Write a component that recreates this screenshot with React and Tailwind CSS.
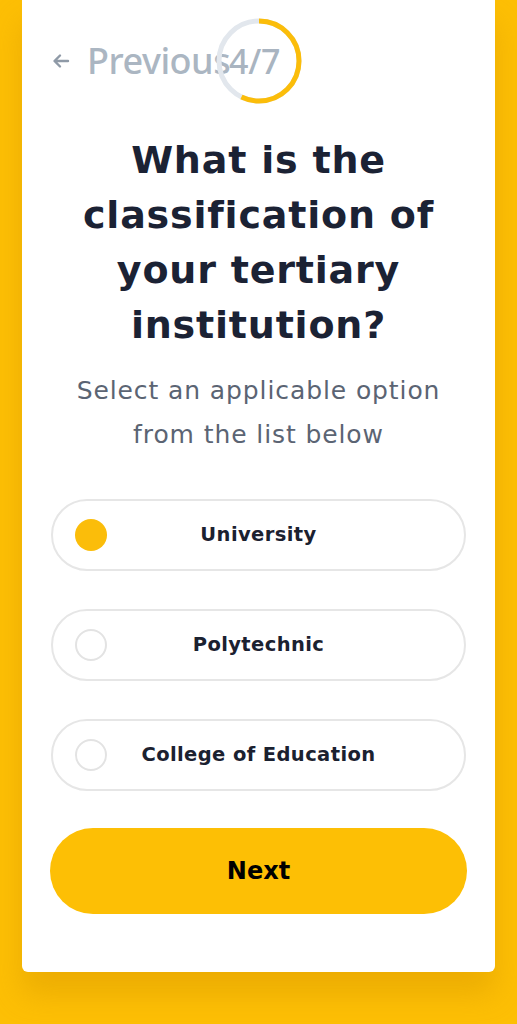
import React from "react";

const options = ["University", "Polytechnic", "College of Education"];

function Ring() {
  const r = 40;
  const c = 2 * Math.PI * r;
  const frac = 4 / 7;
  return (
    <svg width="88" height="88" viewBox="0 0 88 88" className="absolute left-1/2 top-0 -translate-x-1/2">
      <circle cx="44" cy="44" r={r} fill="none" stroke="#e2e7ed" strokeWidth="5" />
      <circle
        cx="44"
        cy="44"
        r={r}
        fill="none"
        stroke="#fbbd0a"
        strokeWidth="5"
        strokeDasharray={`${c * frac} ${c}`}
        transform="rotate(-90 44 44)"
      />
    </svg>
  );
}

export default function App() {
  return (
    <div className="h-[1024px] overflow-hidden bg-[#fdbf05] px-[22px] font-['DejaVu_Sans','Noto_Sans',sans-serif]">
      <div className="h-[972px] rounded-b-[6px] bg-white shadow-[0_22px_30px_rgba(215,150,0,0.45)] flex flex-col">
        <div className="relative mt-[17px] h-[88px] flex items-center pl-[30px]">
          <svg width="18" height="16" viewBox="0 0 18 16" className="mr-[17px]">
            <path d="M16 8H3M8 2.5L2.5 8L8 13.5" fill="none" stroke="#8f9aa7" strokeWidth="2.4" strokeLinecap="round" strokeLinejoin="round" />
          </svg>
          <span className="text-[36px] font-medium text-[#abb6c2] tracking-[-0.5px] font-['Noto_Sans',sans-serif]">Previous</span>
          <Ring />
          <span className="absolute left-[207px] top-[19px] text-[34px] font-medium text-[#a9b4c0] tracking-[-0.3px] font-['Noto_Sans',sans-serif]">4/7</span>
        </div>
        <h1 className="mt-[28px] text-center text-[38px] leading-[55px] font-bold text-[#1b2234] tracking-[0.8px]">
          What is the<br />classification of<br />your tertiary<br />institution?
        </h1>
        <p className="mt-[16px] text-center text-[25px] leading-[44px] text-[#5b6473] tracking-[0.9px]">
          Select an applicable option<br />from the list below
        </p>
        <div className="mt-[42px] px-[29px] flex flex-col gap-[38px]">
          {options.map((o, i) => (
            <div key={o} className="relative h-[72px] rounded-full border-2 border-[#e6e6e6] flex items-center justify-center">
              <span
                className={
                  "absolute left-[22px] top-1/2 -translate-y-1/2 h-[32px] w-[32px] rounded-full " +
                  (i === 0 ? "bg-[#fbbd0a]" : "border-2 border-[#e3e3e3]")
                }
              />
              <span className="text-[19.5px] font-bold text-[#1b2130] tracking-[0.4px]">{o}</span>
            </div>
          ))}
        </div>
        <div className="mt-[37px] mx-[28px] h-[86px] rounded-full bg-[#fdbf05] flex items-center justify-center">
          <span className="text-[24px] font-bold text-black">Next</span>
        </div>
      </div>
    </div>
  );
}
